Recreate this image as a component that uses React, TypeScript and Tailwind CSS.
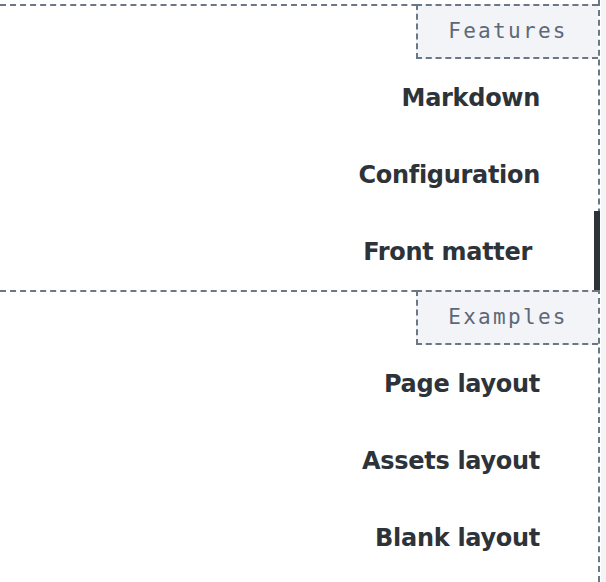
import React from "react";

type NavItem = { label: string; active?: boolean };
type NavSection = { title: string; items: NavItem[] };

const sections: NavSection[] = [
  {
    title: "Features",
    items: [{ label: "Markdown" }, { label: "Configuration" }, { label: "Front matter", active: true }],
  },
  {
    title: "Examples",
    items: [{ label: "Page layout" }, { label: "Assets layout" }, { label: "Blank layout" }],
  },
];

const Section = ({ title, items }: NavSection) => {
  return (
    <div className="border-t-2 border-dashed border-[#6b7785]">
      <div className="flex justify-end">
        <div className="w-[182px] h-[55px] -mt-[2px] border-t-2 border-l-2 border-b-2 border-dashed border-[#6b7785] bg-[#f2f4f7] flex items-center justify-center">
          <span className="font-['DejaVu_Sans_Mono',monospace] text-[21px] tracking-[2.3px] text-[#5c6878]">{title}</span>
        </div>
      </div>
      {items.map((item) => (
        <div key={item.label} className="relative h-[77px] flex items-center justify-end pr-[58px]">
          <span
            className={
              "font-['DejaVu_Sans',sans-serif] font-bold text-[24px] tracking-[-0.3px] text-[#2d3339] " +
              (item.active ? "mr-2" : "")
            }
          >
            {item.label}
          </span>
          {item.active ? <div className="absolute right-[-2px] -top-[2px] bottom-0 w-[6px] bg-[#2d3339]"></div> : null}
        </div>
      ))}
    </div>
  );
};

const App = () => {
  return (
    <div className="w-[606px] h-[582px] overflow-hidden bg-white flex">
      <div className="w-[600px] h-full pt-1 border-r-2 border-dashed border-[#6b7785]">
        {sections.map((s) => (
          <Section key={s.title} title={s.title} items={s.items}></Section>
        ))}
      </div>
      <div className="w-px h-full bg-white"></div>
      <div className="flex-1 h-full bg-[#f3f4f6]"></div>
    </div>
  );
};

export default App;
